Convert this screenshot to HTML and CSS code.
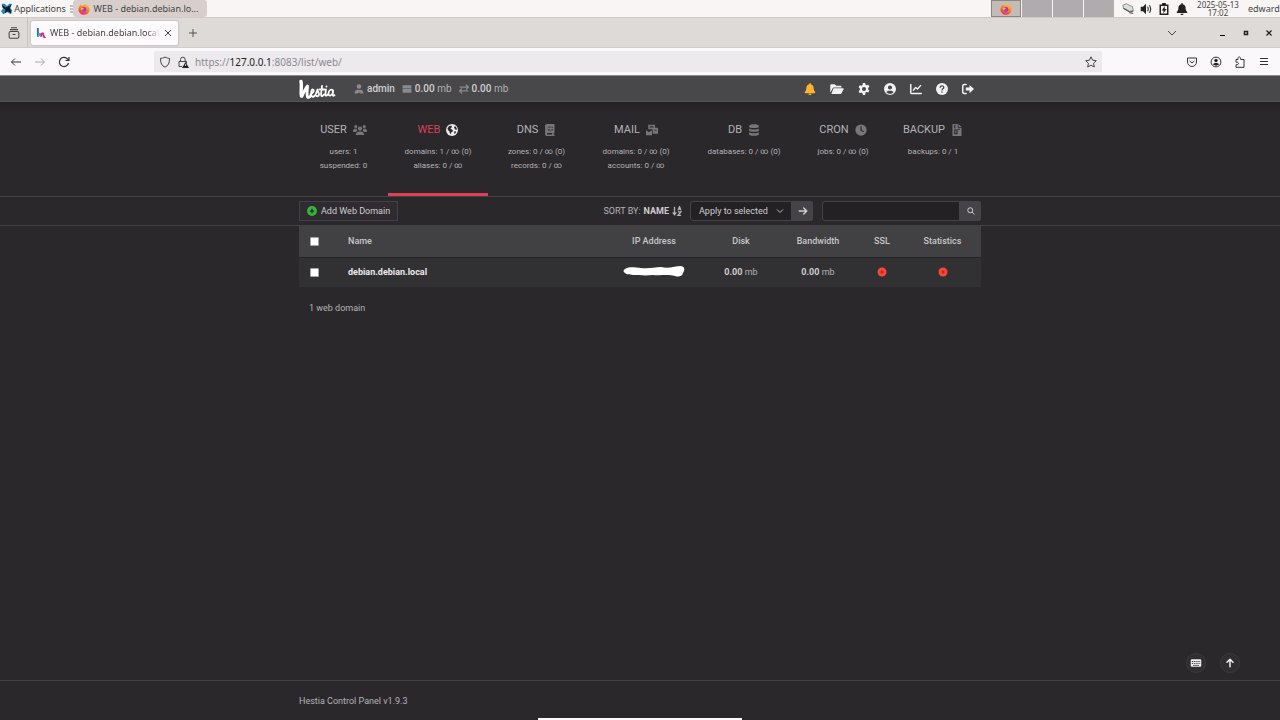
FILE: index.html
```html
<!DOCTYPE html>
<html lang="en">
<head>
<meta charset="utf-8">
<meta name="viewport" content="width=device-width, initial-scale=1">
<title>WEB - debian.debian.local</title>
<link rel="stylesheet" href="styles.css">
</head>
<body>
<svg class="sprite" aria-hidden="true">
  <defs>
    <linearGradient id="flame" x1="0.8" y1="0" x2="0.3" y2="1"><stop offset="0" stop-color="#ffd02e"/><stop offset="0.5" stop-color="#ff7b2e"/><stop offset="1" stop-color="#ec2a5e"/></linearGradient>
  </defs>
  <symbol id="firefox" viewBox="0 0 16 16">
    <path fill="url(#flame)" d="M2.2 4 3 2l1.6 1.8C5.500 3.300 6.500 3 7 3 8 1.800 9 .8 10 .5c0 1.400 1 2.300 2 3l.6-.8c2 1.700 3 4 2.800 6.500C15 13 12 15.600 8.200 15.600 4 15.600.8 12.600.7 8.500.7 6.500 1.300 5 2.200 4z"/>
    <circle cx="8" cy="8.500" r="3.200" fill="#8a45d6"/>
    <path fill="#ffb12e" d="M3.800 6.500c2-.7 3.500 0 4.200 1-1.700.2-2.200 1.200-1.700 2.300-1.700-.3-2.600-1.500-2.500-3.300z"/>
  </symbol>
  <symbol id="bell" viewBox="0 0 16 16"><path d="M7 1a1 1 0 0 1 2 0v.7c2.300.5 3.800 2.400 3.800 4.700 0 2.700.7 4.100 1.900 5.400.7.8.2 1.700-.7 1.700H2c-.9 0-1.400-.9-.7-1.700 1.200-1.300 1.900-2.700 1.900-5.400C3.200 4.100 4.700 2.200 7 1.700zM6 14.300h4a2 2 0 0 1-4 0z"/></symbol>
  <symbol id="arrow" viewBox="0 0 16 16"><path fill="none" stroke="currentColor" stroke-width="2" stroke-linecap="round" stroke-linejoin="round" d="M3 8h10M9 4l4 4-4 4"/></symbol>
  <symbol id="cross-dot" viewBox="0 0 16 16"><circle cx="8" cy="8" r="7.200" fill="#fc4438"/><path fill="none" stroke="#a82c26" stroke-width="1.800" d="m6 6 4 4m0-4-4 4"/></symbol>
</svg>

<header class="taskbar">
  <button class="apps" type="button">
    <svg class="i12" viewBox="0 0 16 16"><path fill="#1b8ad0" d="M1 1h4l3 3 3-3h4l-3 5 3 4-2 5-5-3-5 3-3-4 3-4z"/><path fill="#15181c" d="m1 2 5 4 5-2 3-2-2 5 2 7-5-3-4 3 1-5-4-3z"/></svg>
    Applications
  </button>
  <span class="grip" aria-hidden="true"><svg class="i8" viewBox="0 0 8 8" stroke="#888"><path d="M2 1h3M2 4h3M2 7h3"/></svg></span>
  <button class="task" type="button"><svg class="i12"><use href="#firefox"/></svg>WEB - debian.debian.lo...</button>
  <div class="pager">
    <span class="desk desk-active"><svg class="i12"><use href="#firefox"/></svg></span><span class="desk"></span><span class="desk"></span><span class="desk"></span>
  </div>
  <div class="tray">
    <svg class="i12" viewBox="0 0 16 16"><path fill="#ddd" stroke="#777" d="m1 3 5-2 8 4 1 5-5 1-8-4z"/><path fill="none" stroke="#555" stroke-width="1.500" d="m2 7 8 5 5-1M10 13l5 1"/></svg>
    <svg class="i12" viewBox="0 0 16 16"><path fill="#222" d="M1 5h3l4-4v14l-4-4H1z"/><path fill="none" stroke="#333" stroke-width="1.500" d="M10 5q2 3 0 6M12.500 3q3.500 5 0 10"/></svg>
    <svg class="i12" viewBox="0 0 16 16"><path fill="none" stroke="#222" stroke-width="2" d="M3 3h10v12H3z"/><path fill="#222" d="M5.500 0h5v3h-5zM9 4 5 10h2.500L7 14l4.500-6H9z"/></svg>
    <svg class="i12" fill="#222" viewBox="0 0 16 16"><use href="#bell"/></svg>
  </div>
  <time class="clock"><span>2025-05-13</span><span>17:02</span></time>
  <span class="session">edward</span>
</header>

<div class="tabs">
  <button class="tabs-view" type="button" aria-label="Firefox View"><svg class="i12" viewBox="0 0 16 16" fill="none" stroke="#444" stroke-width="1.400"><rect x="1.500" y="6" width="13" height="9" rx="2"/><path d="M2.500 3.500h11M4 1h8M6 10h4"/></svg></button>
  <div class="tab">
    <svg class="i10" viewBox="0 0 16 16" fill="none" stroke-width="3"><path stroke="#246ec2" d="M3 0v14"/><path stroke="#38b1dd" d="M3 13q3-1 4-5"/><path stroke="#d52a85" d="M8 14c0-7 4-7 4-2 0 3 2 3 3 2"/></svg>
    <span class="tab-title">WEB - debian.debian.local</span>
    <button class="tab-close" type="button" aria-label="Close tab"><svg class="i8" viewBox="0 0 8 8" stroke="#444"><path d="m1 1 6 6m0-6-6 6"/></svg></button>
  </div>
  <button class="tab-new" type="button" aria-label="New tab"><svg class="i10" viewBox="0 0 10 10" stroke="#555"><path d="M5 1v8M1 5h8"/></svg></button>
  <div class="window">
    <button type="button" aria-label="List tabs"><svg class="i10" viewBox="0 0 10 10" fill="none" stroke="#444"><path d="m1 3 4 4 4-4"/></svg></button>
    <button class="window-min" type="button" aria-label="Minimise"><svg class="i8" viewBox="0 0 8 8"><path d="M1 6h5v1H1z"/></svg></button>
    <button type="button" aria-label="Maximise"><svg class="i8" viewBox="0 0 8 8" fill="none" stroke="#222" stroke-width="1.500"><path d="M2.500 2.500h3v3h-3z"/></svg></button>
    <button type="button" aria-label="Close"><svg class="i8" viewBox="0 0 8 8" stroke="#222" stroke-width="1.300"><path d="m1.500 1.500 5 5m0-5-5 5"/></svg></button>
  </div>
</div>

<div class="navbar">
  <div class="nav-buttons">
    <button type="button" aria-label="Back"><svg class="i12" viewBox="0 0 12 12" fill="none" stroke="#333"><path d="M11 6H1.500M5 2.500 1.500 6 5 9.500"/></svg></button>
    <button type="button" aria-label="Forward"><svg class="i12" viewBox="0 0 12 12" fill="none" stroke="#aaa"><path d="M1 6h9.500M7 2.500 10.500 6 7 9.500"/></svg></button>
    <button type="button" aria-label="Reload"><svg class="i12" viewBox="0 0 12 12" fill="none" stroke="#333" stroke-width="1.200"><path d="M10.500 7A4.600 4.600 0 1 1 9 2.500L10.500 4M11 1v3.500H7.500"/></svg></button>
  </div>
  <div class="url">
    <svg class="i12" viewBox="0 0 12 12" fill="none" stroke="#444"><path d="M6 1c1.500 1 3 1.300 4.500 1.300C10.700 7 9 10 6 11.200 3 10 1.300 7 1.500 2.300 3 2.300 4.500 2 6 1z"/></svg>
    <svg class="i12 url-lock" viewBox="0 0 12 12"><path fill="none" stroke="#444" d="M5 10.500H2v-5h7.500v2M3.500 5V3.500a2.300 2.300 0 0 1 4.600 0V5"/><path fill="#222" d="m8.500 6 3.500 6H5z"/><path stroke="#eee" stroke-width=".8" d="M8.500 8v2"/></svg>
    <div class="url-text" role="textbox" contenteditable="true" spellcheck="false" aria-label="Address">https://<b>127.0.0.1</b>:8083/list/web/</div>
    <button type="button" aria-label="Bookmark"><svg class="i12" viewBox="0 0 12 12" fill="none" stroke="#444"><path stroke-linejoin="round" d="m6 .8 1.600 3.400 3.700.5-2.700 2.600.7 3.700L6 9.200 2.700 11l.7-3.700L.7 4.700l3.700-.5z"/></svg></button>
  </div>
  <div class="nav-tools">
    <button type="button" aria-label="Pocket"><svg class="i12" viewBox="0 0 12 12" fill="none" stroke="#333"><path d="M1.500 2h9v4a4.500 4.500 0 0 1-9 0zM3.500 4.800 6 7l2.500-2.200"/></svg></button>
    <button type="button" aria-label="Account"><svg class="i12" viewBox="0 0 12 12" fill="#222"><circle cx="6" cy="6" r="4.900" fill="none" stroke="#333"/><circle cx="6" cy="4.500" r="1.700"/><path d="M3 8.500C3 6.500 9 6.500 9 8.500L6 9.800z"/></svg></button>
    <button type="button" aria-label="Extensions"><svg class="i12" viewBox="0 0 12 12" fill="none" stroke="#333"><path d="M4 3.500C3.500 0 7 0 6.700 3.500H10v7.800H2V8.800c3.300.3 3.300-3 0-2.600V3.500z"/></svg></button>
    <button type="button" aria-label="Menu"><svg class="i12" viewBox="0 0 12 12" stroke="#333"><path d="M2 2.500h8M2 5.500h8M2 8.500h8"/></svg></button>
  </div>
</div>

<div class="app">
  <header class="topbar">
    <div class="container topbar-inner">
      <a class="logo" href="#" aria-label="Hestia"><svg viewBox="0 0 38 20" fill="none" stroke="#fff" stroke-linecap="round" stroke-linejoin="round"><path stroke-width="3.400" d="M2 2.500C3 7 1.500 13 2.500 17"/><path stroke-width="2.800" d="M3 17C5.500 12 6.500 9 8.500 7c0 5-1 8 0 11 1 1 2 0 3-1"/><path stroke-width="1.800" d="M11.500 15c3-1 4-4 2.500-4.500S11.500 14 12.500 16.500s3 .8 4-.8c1-2 1.500-3.500 2-5.200 0 2 1.500 3 1.500 5s-2 2-3 1.300M23 7l-1 8.500c.3 2.500 2 1.500 3 0M20.500 10.500h5M27 10.500l-.7 5c.3 2 1.500 1.300 2.400 0M27.500 7.300v.2M34 11.500c-2-2-4.500 0-4.500 3s3 3 4.500-1v-2l-.3 4c.2 1.700 1 1.500 1.800.7"/></svg></a>
      <div class="usage">
        <span class="usage-item"><svg class="i10" viewBox="0 0 16 16" fill="#8b8a8d"><circle cx="8" cy="4" r="3.700"/><path d="M1 15c0-4 2-6 5-6l1 1-1 5zm14 0c0-4-2-6-5-6l-1 1 1 5zM7 9h2l1 5H6z"/></svg><b>admin</b></span>
        <span class="usage-item"><svg class="i10" viewBox="0 0 16 16" fill="#8b8a8d"><path d="M1 2h14v5H1zM1 8h14v6H1z"/></svg><span><b>0.00</b> mb</span></span>
        <span class="usage-item"><svg class="i10" viewBox="0 0 16 16" fill="none" stroke="#8b8a8d" stroke-width="2"><path d="M1 5h13m-3-4 4 4-4 4M15 11H2m3-4-4 4 4 4"/></svg><span><b>0.00</b> mb</span></span>
      </div>
      <nav class="actions">
        <button class="warn" type="button" aria-label="Notifications"><svg class="i12"><use href="#bell"/></svg></button>
        <a href="#" aria-label="File manager"><svg class="i14" viewBox="0 0 18 16"><path d="M0 13V3c0-1 .6-1.500 1.500-1.500H6l2 2h5.500c1 0 1.500.6 1.500 1.500v1H5c-1 0-1.600.4-2 1.200zM5 7h12c.8 0 1.200.7.800 1.400L15 13.500c-.3.600-.8 1-1.500 1H1.500L4 7.700c.2-.5.500-.7 1-.7z"/></svg></a>
        <a href="#" aria-label="Server settings"><svg class="i12" viewBox="0 0 16 16"><path fill-rule="evenodd" d="M6.500 0h3l.5 2.300 1.500.8 2.200-.8 1.500 2.700-1.700 1.600v1.900l1.700 1.600-1.500 2.700-2.200-.8-1.500.8L9.500 16h-3L6 13.700l-1.500-.9-2.200.8L.8 10.900l1.700-1.600V7.400L.8 5.800 2.300 3l2.200.8L6 2.900zM8 5.300a2.700 2.700 0 1 0 0 5.400 2.700 2.700 0 0 0 0-5.400z"/></svg></a>
        <a href="#" aria-label="Account"><svg class="i12" viewBox="0 0 16 16"><path fill-rule="evenodd" d="M8 0a8 8 0 1 1 0 16A8 8 0 0 1 8 0zm0 3.200a2.800 2.800 0 1 0 0 5.600 2.800 2.800 0 0 0 0-5.600zm-4.800 9.200a6.400 6.400 0 0 0 9.600 0c-.6-1.400-1.700-2.200-3.200-2.200H6.400c-1.500 0-2.600.8-3.200 2.200z"/></svg></a>
        <a href="#" aria-label="Statistics"><svg class="i12" viewBox="0 0 16 16" fill="none" stroke="currentColor" stroke-width="2" stroke-linecap="round" stroke-linejoin="round"><path d="M1 2v10.500c0 1 .5 1.500 1.500 1.500H15M4.500 9.500l3-3.500L10 8l4-4.500"/></svg></a>
        <a href="#" aria-label="Help"><svg class="i12" viewBox="0 0 16 16"><circle cx="8" cy="8" r="8"/><path fill="none" stroke="#484749" stroke-width="1.800" stroke-linecap="round" d="M5.600 5.700C6 3 10.500 3.400 10.400 6 10.400 7.600 8 7.600 8 9.200M8 12v.2"/></svg></a>
        <a href="#" aria-label="Log out"><svg class="i12" viewBox="0 0 16 16"><path fill="none" stroke="currentColor" stroke-width="2" stroke-linecap="round" d="M5.500 2H3a2 2 0 0 0-2 2v8a2 2 0 0 0 2 2h2.500"/><path d="M10 2.500 16 8l-6 5.500V10H5V6h5z"/></svg></a>
      </nav>
    </div>
  </header>

  <nav class="menu">
    <div class="container menu-grid">
      <a class="item" href="#"><span class="item-title">USER <svg class="i14" viewBox="0 0 20 16"><circle cx="4" cy="3" r="2.200"/><circle cx="16" cy="3" r="2.200"/><circle cx="10" cy="6" r="3"/><path d="M0 10c0-3 2-4 5-4l1 3-2 2H0zM20 10c0-3-2-4-5-4l-1 3 2 2h4zM4 15c0-3 2-5 4.500-5h3c2.500 0 4.500 2 4.500 5z"/></svg></span><span>users: 1</span><span>suspended: 0</span></a>
      <a class="item item-active" href="#"><span class="item-title">WEB <svg class="i12" viewBox="0 0 16 16"><circle cx="8" cy="8" r="8"/><path fill="#2a282b" d="M2 5.500 4 3l3-1 1 2-2 1.500 1 1.500 2 1v2l-2 1-.5 2.500L5 12l-.5-2.500L2.500 8zM10.500 4l2-1 2 3-.5 2-2-1zM11 9.500l2.500.5-1 2.500-1.500.5z"/></svg></span><span>domains: 1 / ∞ (0)</span><span>aliases: 0 / ∞</span></a>
      <a class="item" href="#"><span class="item-title">DNS <svg class="i12" viewBox="0 0 16 16"><path fill-rule="evenodd" d="M4 0h10v12h-1v2h1v2H4c-1.500 0-2.500-1-2.500-2.500v-11C1.500 1 2.500 0 4 0zm0 12v2h7v-2z"/><circle cx="8.500" cy="6" r="3.500" fill="#2a282b"/><path fill="none" stroke="#8b8a8d" stroke-width=".9" d="M5 6h7M8.500 2.500v7M7 3q-1 3 0 6M10 3q1 3 0 6"/></svg></span><span>zones: 0 / ∞ (0)</span><span>records: 0 / ∞</span></a>
      <a class="item" href="#"><span class="item-title">MAIL <svg class="i12" viewBox="0 0 16 16"><path d="M3 1h9v4h3q1 0 1 1v7H9V8q0-1-1-1H3zM0 8l4 3 4-3v7H0z"/><path d="M5 3h5v1.500H5zM11.500 7.500H14V9h-2.500z" fill="#2a282b"/></svg></span><span>domains: 0 / ∞ (0)</span><span>accounts: 0 / ∞</span></a>
      <a class="item" href="#"><span class="item-title">DB <svg class="i12" viewBox="0 0 16 16"><path d="M1.500 2.500C1.500-.5 14.500-.5 14.500 2.500v1c0 2.600-13 2.600-13 0zM1.500 6c3 1.700 10 1.700 13 0v2.500c0 2.600-13 2.600-13 0zM1.500 11c3 1.700 10 1.700 13 0v2.500c0 3-13 3-13 0z"/></svg></span><span>databases: 0 / ∞ (0)</span></a>
      <a class="item" href="#"><span class="item-title">CRON <svg class="i12" viewBox="0 0 16 16"><circle cx="8" cy="8" r="7.500"/><path fill="none" stroke="#2a282b" stroke-width="1.600" d="M8 3v5l3.500 2.500"/></svg></span><span>jobs: 0 / ∞ (0)</span></a>
      <a class="item" href="#"><span class="item-title">BACKUP <svg class="i12" viewBox="0 0 16 16"><path d="M2 0h7v5h5v11H2zM10 0l4 4h-4z"/><path fill="none" stroke="#2a282b" stroke-width="1.500" d="M5 1v5M5 8v5h3V8zM9 7h3"/></svg></span><span>backups: 0 / 1</span></a>
    </div>
  </nav>

  <div class="toolbar">
    <div class="container toolbar-inner">
      <a class="add" href="#"><svg class="i10" viewBox="0 0 16 16"><circle cx="8" cy="8" r="8" fill="#34b53a"/><path stroke="#2a282b" stroke-width="2" d="M8 4.500v7M4.500 8h7"/></svg>Add Web Domain</a>
      <button class="sort" type="button">SORT BY: <b>NAME</b><svg class="i10" viewBox="0 0 16 16" fill="none" stroke="currentColor" stroke-width="2"><path d="M4 1v13M1 10l3 4 3-4M9.500 7 12 1l2.500 6M10 5h4M9.500 9.500h5l-5 5.500h5"/></svg></button>
      <form class="bulk">
        <div class="select-box"><select class="select" aria-label="Apply to selected"><option>Apply to selected</option></select><svg class="i8 select-arrow" viewBox="0 0 8 8" fill="none" stroke="#bbb"><path d="m1 2.500 3 3 3-3"/></svg></div>
        <button class="square" type="submit" aria-label="Apply"><svg class="i12"><use href="#arrow"/></svg></button>
      </form>
      <form class="search">
        <input class="search-input" type="search" aria-label="Search">
        <button class="square" type="submit" aria-label="Search"><svg class="i8" viewBox="0 0 16 16" fill="none" stroke="currentColor" stroke-width="2"><circle cx="6.500" cy="6.500" r="5"/><path d="m10 10 5 5"/></svg></button>
      </form>
    </div>
  </div>

  <main class="container main">
    <table class="table">
      <colgroup><col class="c-check"><col><col class="c-ip"><col class="c-disk"><col class="c-band"><col class="c-ssl"><col class="c-stat"></colgroup>
      <thead><tr><th><input class="check" type="checkbox" aria-label="Select all"></th><th class="name">Name</th><th>IP Address</th><th>Disk</th><th>Bandwidth</th><th>SSL</th><th>Statistics</th></tr></thead>
      <tbody><tr>
        <td><input class="check" type="checkbox" aria-label="Select debian.debian.local"></td>
        <td class="name"><a href="#">debian.debian.local</a></td>
        <td><svg class="scribble" viewBox="0 0 62 12"><path fill="#fff" d="M2 3C8 0 12 2 18 2c8 1 14-1 20-1 8 2 14-1 20-1 4 1 4 4 2 7-1 4-5 4-8 3-8-2-14 0-22-1-8 1-14 0-20 0-4-1-6 0-8-2-2-1-2-3 0-4z"/></svg></td>
        <td><b>0.00</b> mb</td><td><b>0.00</b> mb</td>
        <td><svg class="i10" role="img" aria-label="Disabled"><use href="#cross-dot"/></svg></td>
        <td><svg class="i10" role="img" aria-label="Disabled"><use href="#cross-dot"/></svg></td>
      </tr></tbody>
    </table>
    <p class="count">1 web domain</p>
  </main>

  <div class="fabs">
    <button class="fab" type="button" aria-label="Shortcuts"><svg class="i12" viewBox="0 0 16 16"><rect x="1" y="3" width="14" height="10" rx="1.500"/><path stroke="#333" stroke-width="1.300" stroke-dasharray="1.500 1" d="M2.500 6h11M2.500 8.500h11"/><path stroke="#333" d="M4 11.200h8"/></svg></button>
    <button class="fab" type="button" aria-label="Back to top"><svg class="i12 up"><use href="#arrow"/></svg></button>
  </div>
  <footer class="footer"><div class="container">Hestia Control Panel v1.9.3</div></footer>
</div>
<div class="dock"></div>
</body>
</html>
```
FILE: styles.css
```css
* { box-sizing: border-box; }
body { margin: 0; min-height: 100vh; display: flex; flex-direction: column; background: #2a282b; font-family: "Noto Sans", "DejaVu Sans", sans-serif; font-size: 9px; color: #444; }
button { display: inline-flex; align-items: center; justify-content: center; padding: 0; border: 0; background: none; color: inherit; font: inherit; }
a { color: inherit; text-decoration: none; }
svg { display: block; flex: none; }
.sprite { position: absolute; width: 0; height: 0; }
.i8 { width: 8px; height: 8px; }
.i10 { width: 10px; height: 10px; }
.i12 { width: 12px; height: 12px; }
.i14 { width: 14px; height: 12px; }

/* Desktop panel */
.taskbar { display: flex; align-items: center; height: 18px; background: #f8f5f4; border-bottom: 1px solid #cfcac8; }
.apps { gap: 1px; width: 67px; white-space: nowrap; }
.grip { width: 6px; padding-left: 1px; }
.task { gap: 4px; height: 17px; width: 134px; padding-right: 4px; background: #d8cfcc; border-radius: 3px; white-space: nowrap; }
.pager { display: flex; gap: 1px; margin-left: auto; height: 17px; }
.desk { width: 30px; background: #b0abae; }
.desk-active { display: flex; align-items: center; justify-content: center; background: #c3bbb8; border: 1px solid #8b8583; }
.tray { display: flex; gap: 6px; margin-left: 8px; }
.clock { display: flex; flex-direction: column; width: 60px; text-align: center; font-size: 8px; line-height: 8px; }
.session { width: 32px; }

/* Browser tab strip */
.tabs { display: flex; align-items: center; height: 30px; background: #dedad7; border-bottom: 1px solid #cfcbc9; }
.tabs-view { width: 28px; height: 29px; border-right: 1px solid #c5c2c1; }
.tab { display: flex; align-items: center; gap: 4px; width: 147px; height: 24px; margin-left: 3px; padding: 0 6px 0 5px; background: #fcfafc; border-radius: 2px; box-shadow: 0 0 2px #999; }
.tab-title { flex: 1; overflow: hidden; white-space: nowrap; mask-image: linear-gradient(90deg, #000 88%, transparent); }
.tab-new { width: 30px; height: 28px; }
.window { display: flex; align-items: center; gap: 15px; margin-left: auto; padding-right: 7px; }
.window-min { margin-left: 27px; }

/* Browser navigation bar */
.navbar { display: flex; align-items: center; height: 28px; background: #faf8fb; border-bottom: 1px solid #8b8a8d; }
.nav-buttons { display: flex; gap: 12px; width: 154px; padding-left: 10px; }
.url { display: flex; align-items: center; gap: 6px; flex: 1; height: 21px; padding: 0 5px; background: #edeaee; }
.url-text { flex: 1; color: #8c888e; font-size: 10px; outline: 0; }
.url-text b { font-weight: 400; color: #222; }
.nav-tools { display: flex; gap: 12px; margin-left: 84px; padding-right: 10px; }

/* Control panel */
.app { flex: 1; display: flex; flex-direction: column; color: #b5b3b6; font-family: Roboto, "Liberation Sans", sans-serif; font-size: 9px; }
.container { width: 100%; max-width: 682px; margin: 0 auto; }
.topbar { background: #484749; border-bottom: 1px solid #555356; font-size: 10px; }
.topbar-inner { display: flex; align-items: center; height: 25px; }
.logo svg { width: 38px; height: 20px; }
.usage { display: flex; gap: 7px; margin-left: 17px; }
.usage-item { display: flex; align-items: center; gap: 3px; }
.usage b { color: #d2d0d3; font-weight: 500; }
.actions { display: flex; align-items: center; gap: 14px; margin-left: auto; padding-right: 7px; color: #f2f1f4; fill: currentColor; }
.warn { color: #ffb52e; }

.menu { background: linear-gradient(#232124, #2a282b 12px); border-bottom: 1px solid #434144; }
.menu-grid { display: grid; grid-template-columns: 89fr 100fr 97fr 102fr 114fr 84fr 96fr; height: 94px; }
.item { display: flex; flex-direction: column; align-items: center; padding-top: 19px; font-size: 8px; line-height: 14px; fill: #78767a; border-bottom: 3px solid transparent; }
.item-title { display: flex; align-items: center; gap: 6px; margin-bottom: 6px; font-size: 11px; line-height: 18px; }
.item-active { border-color: #dc4156; fill: #eceaed; }
.item-active .item-title { color: #dc4156; }

.toolbar { border-bottom: 1px solid #434144; }
.toolbar-inner { display: flex; align-items: center; height: 28px; }
.add { display: flex; align-items: center; gap: 4px; height: 20px; padding: 0 7px; color: #d0ced1; border: 1px solid #444146; background: #2f2b30; }
.sort { gap: 3px; margin-left: auto; }
.sort b { color: #cfcdd0; }
.bulk { display: flex; margin-left: 8px; }
.select-box { position: relative; }
.select { width: 102px; height: 20px; padding: 0 8px; appearance: none; color: #cfcdd0; background: #232124; border: 1px solid #454347; border-radius: 3px 0 0 3px; font: inherit; }
.select-arrow { position: absolute; right: 8px; top: 6px; pointer-events: none; }
.square { width: 21px; height: 20px; background: #454347; color: #cfcdd0; border-radius: 0 2px 2px 0; }
.search { display: flex; margin-left: 9px; }
.search-input { width: 138px; height: 20px; padding: 0 6px; color: inherit; background: #232124; border: 1px solid #454347; border-radius: 3px 0 0 3px; font: inherit; }

.table { width: 100%; table-layout: fixed; border-collapse: collapse; text-align: center; }
.c-check { width: 30px; }
.c-ip { width: 86px; }
.c-disk { width: 88px; }
.c-band { width: 66px; }
.c-ssl { width: 62px; }
.c-stat { width: 68px; }
.table th, .table td { padding: 0; }
.table th { height: 31px; background: #414043; color: #c9c7ca; font-weight: 500; }
.table td { height: 30px; background: #313033; border-top: 1px solid #262427; }
.table th:last-child, .table td:last-child { padding-right: 9px; }
.table .name { padding-left: 19px; text-align: left; }
td.name, td b { color: #eceaed; font-weight: 700; }
td b { color: #d0ced1; }
.table svg { margin: 0 auto; }
.table .scribble { width: 62px; height: 12px; }
.check { display: block; width: 9px; height: 9px; margin: 0 auto; appearance: none; background: #fff; border: 1px solid #a5a3a6; border-radius: 1px; }
.check:checked { background: #dc4156; }
.count { margin: 15px 10px; line-height: 12px; }
.fabs { position: fixed; right: 40px; bottom: 47px; display: flex; gap: 14px; }
.fab { width: 20px; height: 20px; border-radius: 50%; background: #2f2e31; border: 1px solid #3c3a3d; color: #f0eff2; fill: #f0eff2; }
.up { transform: rotate(-90deg); }
.footer { margin-top: auto; padding: 13px 0 12px; border-top: 1px solid #434144; line-height: 14px; }
.dock { position: fixed; left: 42%; right: 42%; bottom: 0; height: 2px; background: #fcf8fc; }
```
